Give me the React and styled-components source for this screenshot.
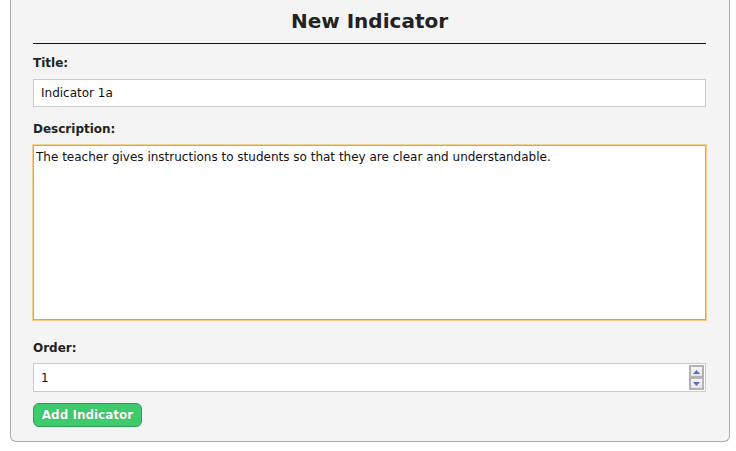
import React from "react";
import styled, { createGlobalStyle } from "styled-components";

const Global = createGlobalStyle`
  html, body { margin: 0; padding: 0; background: #ffffff; }
  body { font-family: "DejaVu Sans", Verdana, sans-serif; }
`;

const Panel = styled.div`
  box-sizing: border-box;
  margin-left: 10px;
  width: 720px;
  height: 442px;
  background: #f4f4f4;
  border: 1px solid #aaaaaa;
  border-top: none;
  border-radius: 0 0 6px 6px;
  padding: 8px 23px 0 22px;
  display: flex;
  flex-direction: column;
`;

const Heading = styled.h1`
  margin: 0;
  font-family: "DejaVu Sans", Verdana, sans-serif;
  font-size: 20px;
  font-weight: bold;
  color: #222;
  text-align: center;
  line-height: 26px;
  padding-bottom: 9px;
  border-bottom: 1px solid #111;
`;

const Label = styled.label`
  display: block;
  font-family: "DejaVu Sans", Verdana, sans-serif;
  font-size: 12px;
  font-weight: bold;
  color: #222;
  line-height: 16px;
  margin-top: ${(p) => p.$top}px;
  margin-bottom: ${(p) => p.$bottom}px;
`;

const inputBase = `
  box-sizing: border-box;
  width: 100%;
  background: #fff;
  font-family: "DejaVu Sans", Tahoma, sans-serif;
  font-size: 12px;
  color: #111;
  outline: none;
  margin: 0;
`;

const TextInput = styled.input`
  ${inputBase}
  height: 28px;
  border: 1px solid #cccccc;
  padding: 0 7px;
`;

const TextArea = styled.textarea`
  ${inputBase}
  display: block;
  height: 175px;
  border: 1px solid #e1a445;
  box-shadow: 0 0 0 1px #f3cf8f;
  padding: 3px 2px;
  resize: none;
  line-height: 16px;
`;

const NumberWrap = styled.div`
  box-sizing: border-box;
  height: 29px;
  background: #fff;
  border: 1px solid #cccccc;
  display: flex;
  align-items: center;
  padding: 0 0 0 7px;
`;

const NumberField = styled.input`
  flex: 1;
  border: none;
  outline: none;
  background: transparent;
  font-family: "DejaVu Sans", Tahoma, sans-serif;
  font-size: 12px;
  color: #111;
  padding: 0;
`;

const Spinner = styled.div`
  display: flex;
  flex-direction: column;
  margin-right: 1px;
`;

const SpinButton = styled.div`
  box-sizing: border-box;
  width: 15px;
  height: 13px;
  border: 2px solid #b3b3b3;
  margin-top: ${(p) => (p.$down ? "-1px" : "0")};
  background: linear-gradient(#f6f6f6, #e4e4e4);
  display: flex;
  align-items: center;
  justify-content: center;
`;

const Button = styled.button`
  align-self: flex-start;
  margin-top: 11px;
  height: 24px;
  width: 109px;
  box-sizing: border-box;
  background: #3ecb6d;
  border: 1px solid #2c9d52;
  border-radius: 6px;
  color: #fff;
  font-family: "DejaVu Sans", Verdana, sans-serif;
  font-weight: bold;
  font-size: 12px;
  padding: 0;
  text-shadow: 0 0 1px rgba(0, 80, 30, 0.5);
`;

const Arrow = ({ up }) => (
  <svg width="7" height="4" viewBox="0 0 7 4">
    <path d={up ? "M0 4 L3.5 0 L7 4 Z" : "M0 0 L7 0 L3.5 4 Z"} fill="#5a6fb6" />
  </svg>
);

export default function App() {
  return (
    <>
      <Global />
      <Panel>
        <Heading>New Indicator</Heading>
        <Label $top={11} $bottom={8}>Title:</Label>
        <TextInput defaultValue="Indicator 1a" />
        <Label $top={14} $bottom={8}>Description:</Label>
        <TextArea defaultValue="The teacher gives instructions to students so that they are clear and understandable." />
        <Label $top={20} $bottom={7}>Order:</Label>
        <NumberWrap>
          <NumberField defaultValue="1" />
          <Spinner>
            <SpinButton><Arrow up /></SpinButton>
            <SpinButton $down><Arrow /></SpinButton>
          </Spinner>
        </NumberWrap>
        <Button>Add Indicator</Button>
      </Panel>
    </>
  );
}
